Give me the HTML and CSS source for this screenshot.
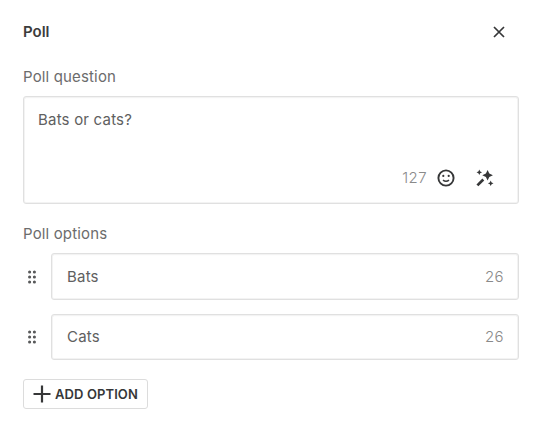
FILE: index.html
```html
<!DOCTYPE html>
<html lang="en">
<head>
	<title>Poll</title>
	<meta charset="utf-8">
	<link rel="stylesheet" href="styles.css">
	<meta name="viewport" content="width=device-width, initial-scale=1">
</head>

<body>

<div id="poll">
	<div class="header">
		<span class="title">Poll</span>
		<svg class="close" viewBox="0 0 12 12"><path d="M1 1L11 11M11 1L1 11"/></svg>
	</div>

	<div class="label">Poll question</div>
	<div class="box question">
		<div class="text">Bats or cats?</div>
		<div class="tools">
			<span class="count">127</span>
			<svg class="smile" viewBox="0 0 18 18">
				<circle class="face" cx="9" cy="9" r="7.6"/>
				<circle cx="6.3" cy="6.9" r="1.1"/>
				<circle cx="11.7" cy="6.9" r="1.1"/>
				<path class="mouth" d="M6 11.2Q9 13.4 12 11.2"/>
			</svg>
			<svg class="wand" viewBox="0 0 18 18">
				<path d="M11.6 .9L13.3 4.4L16.9 6.2L13.3 8L11.6 11.5L9.9 8L6.3 6.2L9.9 4.4Z"/>
				<path d="M3.3 .5L4.2 2.4L6.1 3.3L4.2 4.2L3.3 6.1L2.4 4.2L.5 3.3L2.4 2.4Z"/>
				<path d="M14.7 11.5L15.6 13.4L17.5 14.3L15.6 15.2L14.7 17.1L13.8 15.2L11.9 14.3L13.8 13.4Z"/>
				<path class="stick" d="M1.4 16.4L7.3 10.5"/>
			</svg>
		</div>
	</div>

	<div class="label">Poll options</div>
	<div class="row">
		<svg class="drag" viewBox="0 0 8 14"><path d="M1.6 2h.01M6.4 2h.01M1.6 7h.01M6.4 7h.01M1.6 12h.01M6.4 12h.01"/></svg>
		<div class="box option">
			<span>Bats</span>
			<span class="count">26</span>
		</div>
	</div>
	<div class="row">
		<svg class="drag" viewBox="0 0 8 14"><path d="M1.6 2h.01M6.4 2h.01M1.6 7h.01M6.4 7h.01M1.6 12h.01M6.4 12h.01"/></svg>
		<div class="box option">
			<span>Cats</span>
			<span class="count">26</span>
		</div>
	</div>

	<button class="btn" type="button">
		<svg class="plus" viewBox="0 0 18 18"><path d="M9 .5V17.5M.5 9H17.5"/></svg>
		<span>ADD OPTION</span>
	</button>
</div>

</body>
</html>
```

FILE: styles.css
```css
body {
	margin: 0;
	background: #fff;
	font-family: "Inter", "Liberation Sans", sans-serif;
	font-size: 15px;
	line-height: 20px;
	letter-spacing: 0.2px;
	color: #606060;
}
svg{
	display: block;
	flex: none;
}
#poll{
	display: flex;
	flex-direction: column;
	width: 496px;
	padding: 22px 0 0 23px;
}
.header{
	display: flex;
	justify-content: space-between;
	align-items: center;
	height: 20px;
	padding-right: 14px;
}
.title{
	font-weight: 600;
	letter-spacing: 0;
	color: #3c3c3c;
}
.close{
	width: 12px;
	height: 12px;
	fill: none;
	stroke: #363738;
	stroke-width: 1.7;
}
.label{
	margin-top: 25px;
	margin-bottom: 9px;
	letter-spacing: 0.15px;
	color: #6c6c6c;
}
.box{
	box-sizing: border-box;
	border: 1px solid #e0e0e0;
	border-radius: 3px;
	box-shadow: inset 0 0 0 1px #f3f3f3, inset 0 1px 1px #e6e6e6;
}
.question{
	display: flex;
	flex-direction: column;
	justify-content: space-between;
	height: 108px;
	padding: 13px 24px 15px 14px;
	margin-bottom: -5px;
}
.tools{
	display: flex;
	align-items: center;
	justify-content: flex-end;
}
.count{
	font-weight: 300;
	letter-spacing: 0.4px;
	color: #8a8a8a;
}
.smile{
	width: 18px;
	height: 18px;
	margin-left: 10px;
	fill: #363738;
}
.face{
	fill: none;
	stroke: #363738;
	stroke-width: 1.9;
}
.mouth{
	fill: none;
	stroke: #363738;
	stroke-width: 1.6;
}
.wand{
	width: 18px;
	height: 18px;
	margin-left: 21px;
	fill: #363738;
}
.stick{
	stroke: #363738;
	stroke-width: 2.7;
}
.row{
	display: flex;
	align-items: center;
	margin-bottom: 14px;
}
.drag{
	width: 8px;
	height: 14px;
	margin: 0 15px 0 5px;
	fill: none;
	stroke: #58595a;
	stroke-width: 3.1;
	stroke-linecap: round;
}
.option{
	display: flex;
	flex: 1;
	justify-content: space-between;
	align-items: center;
	height: 47px;
	padding: 1px 14px 0 15px;
}
.row + .row .option{
	height: 46px;
	padding-top: 0;
}
.btn{
	display: flex;
	align-items: center;
	align-self: flex-start;
	box-sizing: border-box;
	width: 125px;
	height: 30px;
	margin-top: 5px;
	padding: 0 0 0 9px;
	border: 1px solid #dcdcdc;
	border-radius: 3px;
	background: #fff;
	font: 600 13px "Inter", "Liberation Sans", sans-serif;
	letter-spacing: 0.1px;
	color: #363738;
	white-space: nowrap;
	cursor: pointer;
}
.plus{
	width: 18px;
	height: 18px;
	margin-right: 4px;
	stroke: #363738;
	stroke-width: 2.2;
}
```
